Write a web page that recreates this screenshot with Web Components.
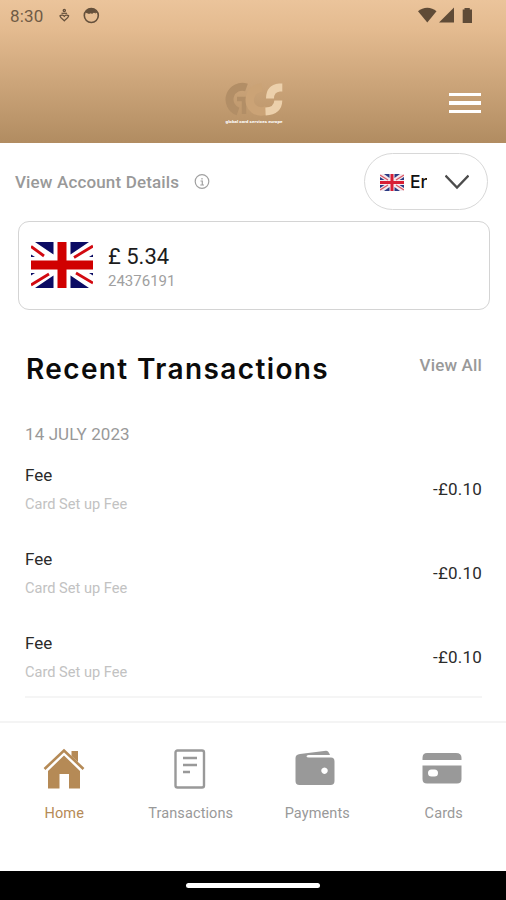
<!DOCTYPE html>
<html lang="en">
<head>
<meta charset="utf-8">
<title>Accounts</title>
<style>
  body {
    margin: 0;
    background: #fff;
    font-family: Roboto, 'Liberation Sans', sans-serif;
  }
</style>
</head>
<body>
<bank-app></bank-app>

<script>
class UkFlag extends HTMLElement {
  constructor() {
    super();
    this.attachShadow({ mode: 'open' });
    this.shadowRoot.innerHTML = `
    <style>
      :host { display: block; }
      svg { display: block; width: 100%; height: 100%; }
    </style>
    <svg viewBox="0 0 62 46" preserveAspectRatio="none">
      <rect width="62" height="46" fill="#fff" />
      <path d="M4 0H22.500V12.500zM58 0H39.500V12.500zM4 46H22.500V33.500zM58 46H39.500V33.500z" fill="#0b0b63" />
      <path d="M0 12.500L4 15H0zM62 12.500L58 15H62zM0 33.500L4 31H0zM62 33.500L58 31H62z" fill="#0b0b63" />
      <path d="M0 4.500L13 14M62 4L43 15.500M0 43L18 32M62 41L45 31" stroke="#d20a11" stroke-width="2.800" />
      <path d="M31 0V46M0 23H62" stroke="#d00000" stroke-width="9" />
    </svg>
    `;
  }
}

class StatusBar extends HTMLElement {
  constructor() {
    super();
    this.attachShadow({ mode: 'open' });
    this.shadowRoot.innerHTML = `
    <style>
      :host {
        display: flex;
        align-items: center;
        height: 32px;
        padding: 0 32px 0 10px;
        box-sizing: border-box;
        color: #705b45;
      }
      .time { font-size: 17px; line-height: 32px; width: 47px; letter-spacing: .2px; }
      svg { display: block; }
      .right { margin-left: auto; }
    </style>
    <span class="time">8:30</span>
    <svg width="46" height="20" viewBox="57 6 46 20" fill="none" stroke="#65503b">
      <circle cx="64.300" cy="10.500" r="1.100" stroke-width="1.300" />
      <path d="M61.500 13.300h5.600" stroke-width="1.200" />
      <path d="M60 15.800c1.500-1.500 3.500-.5 4.300.5 .8-1 2.800-2 4.300-.5 0 1.500-2.500 3.500-4.300 5-1.800-1.500-4.300-3.500-4.300-5z" stroke-width="1.300" />
      <circle cx="91.300" cy="15.500" r="7" stroke-width="1.600" />
      <path d="M86 12.500c2-5 8.600-5 10.600 0-1.500 1-2-.5-3 0-1.500 1.500-2.500 0-3.500.5-1.500 1-2.500-.5-4.100-.5z" fill="#65503b" />
    </svg>
    <svg class="right" width="56" height="20" viewBox="418 6 56 20" fill="#5f4b37">
      <path d="M418 11.300c5-4.700 13.500-4.700 18.500 0L427.300 22.500z" />
      <path d="M454 7.500V22.500H439z" />
      <path d="M464.500 8h5.300v1.500h2.200V23h-9.300V9.500h1.800z" />
    </svg>
    `;
  }
}

class BrandLogo extends HTMLElement {
  constructor() {
    super();
    this.attachShadow({ mode: 'open' });
    this.shadowRoot.innerHTML = `
    <style>
      :host { display: block; width: 60px; height: 44px; }
      svg { display: block; }
      text { font: 700 4.300px Roboto, sans-serif; }
    </style>
    <svg width="60" height="44" viewBox="224 82 60 44" fill="none">
      <path d="M246.500 87.500A12 12 0 1 0 238 111.500" stroke="#b28e66" stroke-width="8" />
      <path d="M237 99H244V114" stroke="#b28e66" stroke-width="4.500" />
      <path d="M262 87.500C248 89 247 104 254 109C258 112 262 112.500 267 110" stroke="#cba376" stroke-width="8.500" />
      <path d="M282.300 87.500H279.500Q270 88.500 270 98.500" stroke="#ecd0ab" stroke-width="8" />
      <path d="M278.300 100.500Q278 111 265.500 111.500" stroke="#ecd0ab" stroke-width="8" />
      <text x="225.500" y="122.800" fill="#fff" textLength="57" lengthAdjust="spacingAndGlyphs">global card services europe</text>
    </svg>
    `;
  }
}

class AppHeader extends HTMLElement {
  constructor() {
    super();
    this.attachShadow({ mode: 'open' });
    this.shadowRoot.innerHTML = `
    <style>
      :host {
        display: block;
        height: 143px;
        background: linear-gradient(#ebc49b 0%, #e4bb90 20%, #b18c61 100%);
      }
      .bar {
        display: grid;
        grid-template-columns: 1fr 60px 1fr;
        align-items: center;
        height: 44px;
        padding: 50px 25px 0 26px;
      }
      .menu {
        display: grid;
        gap: 5px;
        width: 32px;
        justify-self: end;
        margin-top: -2px;
      }
      .menu i { height: 3.500px; background: #fff; }
    </style>
    <status-bar></status-bar>
    <div class="bar">
      <span></span>
      <brand-logo></brand-logo>
      <div class="menu"><i></i><i></i><i></i></div>
    </div>
    `;
  }
}

class LanguageSelect extends HTMLElement {
  constructor() {
    super();
    this.attachShadow({ mode: 'open' });
    this.shadowRoot.innerHTML = `
    <style>
      :host {
        display: flex;
        align-items: center;
        box-sizing: border-box;
        width: 124px;
        height: 57px;
        padding: 0 18px 0 15px;
        border: 1px solid #d8d8d8;
        border-radius: 29px;
      }
      .flag { display: block; margin-top: 2px; }
      .name {
        width: 17px;
        margin-left: 6px;
        margin-top: 1px;
        overflow: hidden;
        white-space: nowrap;
        font: 500 17.500px/24px Inter, sans-serif;
        color: #111;
      }
      .arrow { margin-left: auto; }
    </style>
    <svg class="flag" width="24" height="17" viewBox="0 0 24 17">
      <rect width="24" height="17" rx="1.500" fill="#f3e9ee" />
      <path d="M4 0H9.500V4zM20 0H14.500V4zM4 17H9.500V13zM20 17H14.500V13zM0 3L4.500 6H0zM24 3L19.500 6H24zM0 14L4.500 11H0zM24 14L19.500 11H24z" fill="#2b3a83" />
      <path d="M0 1L8 6M24 1L16 6M0 16L8 11M24 16L16 11" stroke="#dc5663" stroke-width="1.300" />
      <path d="M12 0V17M0 8.500H24" stroke="#d81e34" stroke-width="3" />
    </svg>
    <span class="name"><slot></slot></span>
    <svg class="arrow" width="24" height="16" viewBox="0 0 24 16" fill="none">
      <path d="M.500 1.500L12 13.500L23.500 1.500" stroke="#4c4c4c" stroke-width="2.300" />
    </svg>
    `;
  }
}

class AccountCard extends HTMLElement {
  constructor() {
    super();
    this.attachShadow({ mode: 'open' });
    this.shadowRoot.innerHTML = `
    <style>
      :host {
        display: flex;
        align-items: center;
        box-sizing: border-box;
        height: 89px;
        padding: 0 0 1px 12px;
        border: 1.500px solid #d4d4d4;
        border-radius: 11px;
      }
      uk-flag { width: 62px; height: 46px; }
      .info { margin-left: 15px; }
      .balance { font-size: 22px; line-height: 28px; margin-top: 4px; color: #1c1c1c; }
      .number { font-size: 15px; line-height: 20px; color: #a0a0a0; }
    </style>
    <uk-flag></uk-flag>
    <div class="info">
      <div class="balance"><slot name="balance"></slot></div>
      <div class="number"><slot name="number"></slot></div>
    </div>
    `;
  }
}

class TransactionRow extends HTMLElement {
  constructor() {
    super();
    this.attachShadow({ mode: 'open' });
    this.shadowRoot.innerHTML = `
    <style>
      :host {
        display: flex;
        align-items: center;
        justify-content: space-between;
        height: 84px;
      }
      .title { font-size: 17px; line-height: 24px; color: #2b2b2b; margin-bottom: 6px; }
      .note { font-size: 14.600px; line-height: 22px; color: #c2c2c2; }
      .amount { font-size: 17px; color: #2b2b2b; letter-spacing: .2px; }
    </style>
    <div>
      <div class="title">${this.getAttribute('title-text')}</div>
      <div class="note">${this.getAttribute('note')}</div>
    </div>
    <div class="amount">${this.getAttribute('amount')}</div>
    `;
  }
}

const NAV_ICONS = {
  home: `
    <path d="M2.500 22L22 3.500L41.500 22" fill="none" stroke="currentColor" stroke-width="2.600" />
    <path d="M29.500 4h6.500v11L29.500 9z" />
    <path d="M22 8.500L38 24v17.500H27V27h-9.500v14.500H6V24z" />`,
  transactions: `
    <rect x="7.500" y="3.500" width="28.500" height="37" rx="2" fill="none" stroke="currentColor" stroke-width="2.400" />
    <path d="M15 11h14M15 18h14M15 25h7" stroke="currentColor" stroke-width="2.400" />`,
  payments: `
    <path fill-rule="evenodd" d="M5 7L31 3.700Q33.500 3.700 35 8H13.500Q11.500 8 11.500 9.500Q11.500 10.500 14 10.500H36Q39.500 10.500 39.500 14.500V34Q39.500 38 35.500 38H4.500Q.5 38 .5 34V11Q.5 7.500 5 7zM29.500 20.500a3.200 3.200 0 1 0 .01 0z" />`,
  cards: `
    <path d="M6 6H35Q40.500 6 40.500 11V13H1.500V11Q1.500 6 6 6z" />
    <path fill-rule="evenodd" d="M1.500 18.500H40.500V32Q40.500 36.500 36 36.500H6Q1.500 36.500 1.500 32zM10.500 22.500Q7 22.500 7 26T10.500 29.500H13.500Q17 29.500 17 26T13.500 22.500z" />`
};

class NavItem extends HTMLElement {
  constructor() {
    super();
    this.attachShadow({ mode: 'open' });
    this.shadowRoot.innerHTML = `
    <style>
      :host {
        display: flex;
        flex-direction: column;
        align-items: center;
        color: #999;
      }
      :host([active]) { color: #b58a56; }
      svg { display: block; margin-right: 1px; fill: currentColor; }
      span { margin-top: 13px; font-size: 14.500px; line-height: 20px; letter-spacing: .1px; }
    </style>
    <svg width="44" height="44" viewBox="0 0 44 44">${NAV_ICONS[this.getAttribute('icon')]}</svg>
    <span><slot></slot></span>
    `;
  }
}

class BankApp extends HTMLElement {
  constructor() {
    super();
    this.attachShadow({ mode: 'open' });
    this.shadowRoot.innerHTML = `
    <style>
      :host {
        display: flex;
        flex-direction: column;
        height: 900px;
        overflow: hidden;
      }
      .account-head {
        display: flex;
        align-items: center;
        height: 57px;
        padding: 10px 18px 0 15px;
      }
      .account-head b { font-size: 17px; font-weight: 500; color: #999; letter-spacing: .15px; }
      .account-head svg { margin-left: 15px; }
      language-select { margin-left: auto; }
      account-card { margin: 11px 16px 0 18px; }
      .section-head {
        display: flex;
        justify-content: space-between;
        padding: 42px 24px 0 26px;
      }
      h1 { margin: 0; font: 600 28px/34px Inter, sans-serif; color: #0b0b0b; letter-spacing: 1.380px; }
      .all { font-size: 17px; line-height: 26px; font-weight: 500; color: #999; letter-spacing: .15px; }
      .date { padding: 37px 25px 0; font-size: 17px; line-height: 22px; color: #999; letter-spacing: .1px; }
      .list { margin: 2px 24px 0 25px; border-bottom: 2px solid #f5f5f5; }
      transaction-row:last-child { height: 81px; padding-top: 3px; box-sizing: border-box; }
      nav {
        display: grid;
        grid-template-columns: repeat(4, 126.500px);
        height: 124px;
        margin-top: auto;
        padding: 24px 0 0 1px;
        border-top: 2px solid #f4f4f4;
      }
      .gesture {
        display: flex;
        justify-content: center;
        align-items: center;
        height: 29px;
        background: #000;
      }
      .gesture i { width: 134px; height: 5px; border-radius: 3px; background: #fff; }
    </style>
    <app-header></app-header>
    <div class="account-head">
      <b>View Account Details</b>
      <svg width="16" height="16" viewBox="0 0 16 16" fill="none" stroke="#a0a0a0">
        <circle cx="8" cy="7.500" r="6.800" stroke-width="1.200" />
        <path d="M6.500 7H8.300V11M6.300 11H10M8 4V5.500" stroke-width="1.200" />
      </svg>
      <language-select>En</language-select>
    </div>
    <account-card>
      <span slot="balance">£ 5.34</span>
      <span slot="number">24376191</span>
    </account-card>
    <div class="section-head">
      <h1>Recent Transactions</h1>
      <span class="all">View All</span>
    </div>
    <div class="date">14 JULY 2023</div>
    <div class="list">
      <transaction-row title-text="Fee" note="Card Set up Fee" amount="-£0.10"></transaction-row>
      <transaction-row title-text="Fee" note="Card Set up Fee" amount="-£0.10"></transaction-row>
      <transaction-row title-text="Fee" note="Card Set up Fee" amount="-£0.10"></transaction-row>
    </div>
    <nav>
      <nav-item icon="home" active>Home</nav-item>
      <nav-item icon="transactions">Transactions</nav-item>
      <nav-item icon="payments">Payments</nav-item>
      <nav-item icon="cards">Cards</nav-item>
    </nav>
    <div class="gesture"><i></i></div>
    `;
  }
}

customElements.define('uk-flag', UkFlag);
customElements.define('status-bar', StatusBar);
customElements.define('brand-logo', BrandLogo);
customElements.define('app-header', AppHeader);
customElements.define('language-select', LanguageSelect);
customElements.define('account-card', AccountCard);
customElements.define('transaction-row', TransactionRow);
customElements.define('nav-item', NavItem);
customElements.define('bank-app', BankApp);
</script>
</body>
</html>
